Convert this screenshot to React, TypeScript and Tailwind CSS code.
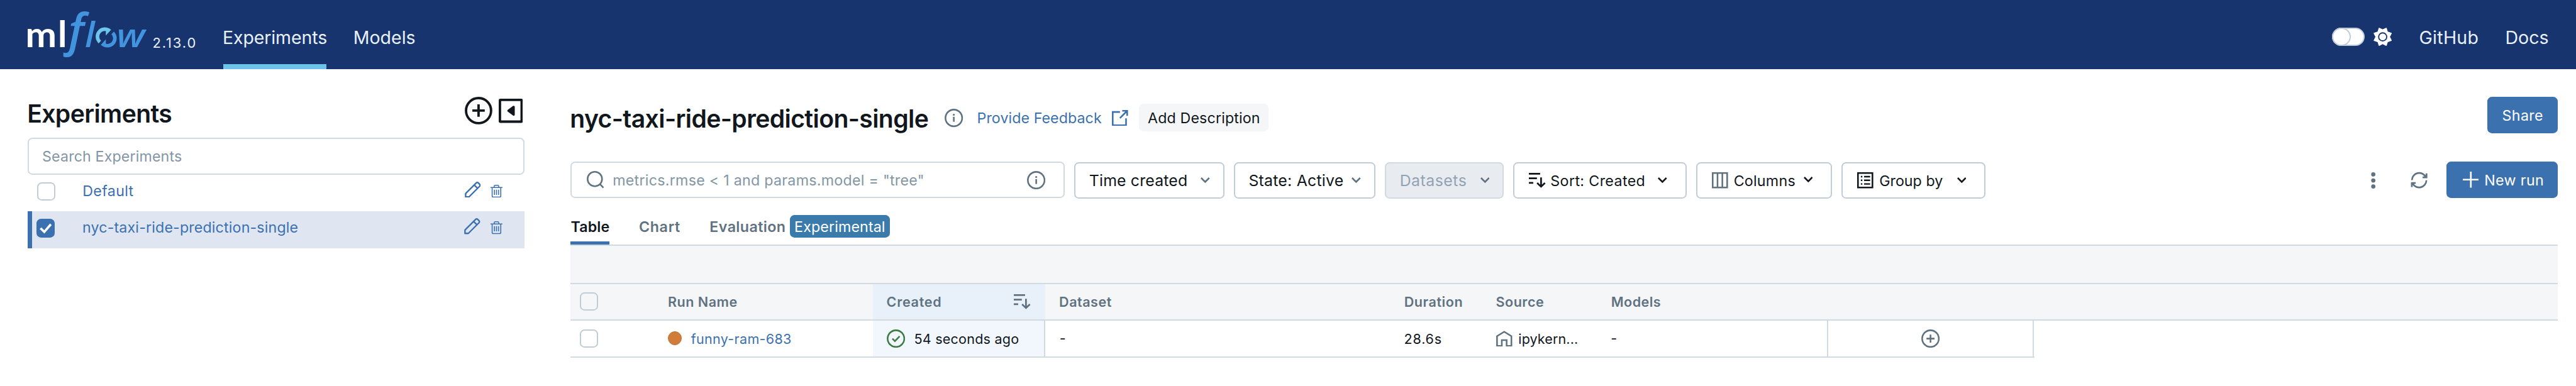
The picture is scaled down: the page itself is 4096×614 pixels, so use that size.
import type { ReactNode } from "react";

function SortIcon({ className = "" }: { className?: string }) {
  return (
    <svg className={`h-[13px] w-[14.5px] shrink-0 ${className}`} viewBox="0 0 14.5 13" fill="none" stroke="currentColor" strokeWidth="1.5">
      <path d="M0 .75h9.8M0 4.75h7M0 8.75h3.8M10.6 4v8M7.2 8.7l3.4 3.3L14 8.7" />
    </svg>
  );
}

function Chevron({ className = "" }: { className?: string }) {
  return (
    <svg className={`h-[5px] w-2 shrink-0 ${className}`} viewBox="0 0 8 5" fill="none" stroke="currentColor" strokeWidth="1.45">
      <path d="M.5.55 4 4.05 7.5.55" />
    </svg>
  );
}

function InfoIcon({ className = "" }: { className?: string }) {
  return (
    <svg className={`size-4 shrink-0 text-[#5f7281] ${className}`} viewBox="0 0 16 16" fill="none" stroke="currentColor" strokeWidth="1.4">
      <circle cx="8" cy="8" r="7.25" />
      <path d="M8 7v4.3" />
      <circle cx="8" cy="5.2" r=".85" fill="currentColor" stroke="none" />
    </svg>
  );
}

function PencilIcon({ className = "" }: { className?: string }) {
  return (
    <svg className={`size-[14px] shrink-0 ${className}`} viewBox="0 0 14 14" fill="none" stroke="currentColor" strokeWidth="1.3" strokeLinejoin="round">
      <path d="M.75 13.25v-2.9l9.3-9.3a1.2 1.2 0 0 1 1.7 0l1.2 1.2a1.2 1.2 0 0 1 0 1.7l-9.3 9.3zM8.3 2.9l2.9 2.9" />
    </svg>
  );
}

function TrashIcon({ className = "" }: { className?: string }) {
  return (
    <svg className={`h-[11.2px] w-[10.3px] shrink-0 ${className}`} viewBox="0 0 10.3 11.2" fill="none" stroke="currentColor" strokeWidth=".85">
      <path d="M0 2.35h10.3M3.2 2.3V1.2Q3.2.45 4 .45h2.3q.8 0 .8.75v1.1M1.4 2.4v7.3q0 1 1 1h5.5q1 0 1-1V2.4" />
      <path d="M3.4 4.2v4.6M5.15 4.2v4.6M6.9 4.2v4.6" />
    </svg>
  );
}

function PlusCircle({ className = "" }: { className?: string }) {
  return (
    <svg className={`size-4 shrink-0 ${className}`} viewBox="0 0 16 16" fill="none" stroke="currentColor" strokeWidth="1.4">
      <circle cx="8" cy="8" r="7.25" />
      <path d="M8 4.5v7M4.5 8h7" />
    </svg>
  );
}

function Box({ className = "" }: { className?: string }) {
  return <span className={`block size-4 shrink-0 rounded-[4px] border-[1.1px] border-[#c0cdd8] ${className}`} />;
}

function Logo() {
  return (
    <svg className="h-[42px] w-[112px] shrink-0 overflow-visible" viewBox="0 0 112 42">
      <g fill="#fff" fontFamily="Lato" fontWeight="700">
        <text transform="translate(1.9 32) scale(1.05 1)" fontSize="30.8">m</text>
        <text x="30.1" y="32" fontSize="31.8">l</text>
      </g>
      <g fill="#4294de" fontFamily="Open Sans" fontWeight="600" fontStyle="italic">
        <text x="39.3" y="31.6" fontSize="39.6">f</text>
        <text x="53.6" y="32" fontSize="31">l</text>
        <text transform="translate(81.2 32) scale(1.13 1)" fontSize="29">w</text>
      </g>
      <g fill="none" strokeWidth="3.1">
        <path d="M66.6 27.8A6.4 6.4 0 0 1 75.2 18.3" stroke="#6ec6ea" />
        <path d="M77.7 19.9A6.4 6.4 0 0 1 68.7 29.2" stroke="#4294de" />
      </g>
      <path d="M76.4 17 71.8 22.2v-4z" fill="#6ec6ea" />
      <path d="M67.2 30.6l4.6-5.2v4z" fill="#4294de" />
    </svg>
  );
}

function FilterButton({ className, children }: { className: string; children: ReactNode }) {
  return (
    <button className={`mt-[.5px] flex h-8 shrink-0 items-center rounded-[4px] border-[1.1px] whitespace-nowrap ${className}`}>
      {children}
    </button>
  );
}

function ExperimentRow({ name, spacing, selected = false }: { name: string; spacing: string; selected?: boolean }) {
  return (
    <div className={`flex h-8 items-start text-[#3c71b0] ${selected ? "border-l-4 border-[#3c71b0] bg-[#dfe6f1] pl-1" : "pl-2"}`}>
      {selected ? (
        <span className="mt-[6.5px] flex size-4 shrink-0 items-center justify-center rounded-[4px] bg-[#3c71b0]">
          <svg className="size-4" viewBox="0 0 16 16" fill="none" stroke="#fff" strokeWidth="2">
            <path d="M3.5 8.2 6.8 11.4 12.5 4.8" />
          </svg>
        </span>
      ) : (
        <Box className="mt-[6.5px]" />
      )}
      <span className={`ml-[23.8px] w-[332.2px] text-[12.7px] leading-[29.2px] ${spacing}`}>{name}</span>
      <PencilIcon className="mt-[6px]" />
      <TrashIcon className="mt-[8.7px] ml-[8.6px]" />
    </div>
  );
}

function TopBar() {
  return (
    <header className="flex h-[60px] items-start bg-[#18346f] text-[15.6px] text-[#e8f1fa]">
      <div className="mt-[9px] ml-5 w-[112px]">
        <Logo />
      </div>
      <span className="ml-[.6px] w-[61.4px] pt-[4.2px] text-[12px] leading-[66px] tracking-[1.037px]">2.13.0</span>
      <div className="flex h-[60px] w-[90px] flex-col items-center justify-between">
        <span className="leading-[66px] tracking-[-.066px]">Experiments</span>
        <span className="-mt-[10px] block h-1 w-full shrink-0 bg-[#6cc4e9]" />
      </div>
      <span className="ml-[23.2px] leading-[66px]">Models</span>
      <div className="ml-auto flex w-[212px] items-start">
        <span className="mt-6 flex h-4 w-7 rounded-full border-[1.1px] border-[#c0cdd8] bg-white">
          <span className="-m-[1.1px] block size-4 rounded-full border-[1.1px] border-[#c0cdd8] bg-white" />
        </span>
        <svg className="mt-6 ml-2 size-4 shrink-0" viewBox="0 0 16 16">
          <path
            d="M8 1.7 11.2.3 12.2 3.6 15.7 4.8 14.1 8 15.7 11.2 12.2 12.4 11.2 15.7 8 14.1 4.8 15.7 3.8 12.4.3 11.2 1.9 8 .3 4.8 3.8 3.6 4.8.3z"
            fill="#fff"
            stroke="#fff"
            strokeWidth=".5"
            strokeLinejoin="round"
          />
          <circle cx="8" cy="8" r="3.5" fill="#fff" stroke="#18346f" strokeWidth="1" />
        </svg>
        <span className="ml-[23.6px] w-[74.9px] leading-[66px] tracking-[.152px]">GitHub</span>
        <span className="leading-[66px]">Docs</span>
      </div>
    </header>
  );
}

function Sidebar() {
  return (
    <aside className="ml-6 w-[432px] shrink-0 pt-6">
      <div className="flex h-9 items-start text-[#11171c]">
        <h2 className="-ml-[.4px] w-[380.4px] text-[21.4px] leading-[29.4px] font-semibold tracking-[-.344px]">Experiments</h2>
        <svg className="mt-[.5px] size-6" viewBox="0 0 24 24" fill="none" stroke="currentColor" strokeWidth="2.1">
          <circle cx="12" cy="12" r="10.9" />
          <path d="M12 6.6v10.8M6.6 12h10.8" />
        </svg>
        <svg className="mt-[2px] ml-[5.5px] size-[21px]" viewBox="0 0 21 21" fill="none" stroke="currentColor" strokeWidth="2.1">
          <rect x="1.05" y="1.05" width="18.9" height="18.9" rx=".4" />
          <path d="M13 7.1v6.8L8.4 10.5z" fill="currentColor" strokeWidth="1.9" strokeLinejoin="round" />
        </svg>
      </div>
      <div className="flex h-8 items-center rounded-[4px] border-[1.1px] border-[#d1d9e1] pl-[11.6px] text-[12.7px] tracking-[.072px] text-[#8396a5]">
        <span className="pt-[1.2px]">Search Experiments</span>
      </div>
      <ExperimentRow name="Default" spacing="tracking-[.188px]" />
      <ExperimentRow name="nyc-taxi-ride-prediction-single" spacing="tracking-[.084px]" selected />
    </aside>
  );
}

function TitleRow() {
  return (
    <div className="flex h-8 items-start whitespace-nowrap">
      <h1 className="-ml-[.4px] w-[326px] text-[21.4px] leading-[38px] font-semibold tracking-[-.334px]">
        nyc-taxi-ride-prediction-single
      </h1>
      <InfoIcon className="mt-[10.8px]" />
      <a className="ml-[12px] w-[117.4px] text-[12.7px] leading-[38.2px] tracking-[.035px] text-[#3c71b0]">Provide Feedback</a>
      <svg className="mt-[11.5px] size-[14px] shrink-0 text-[#3c71b0]" viewBox="0 0 14 14" fill="none" stroke="currentColor" strokeWidth="1.4">
        <path d="M7 1.7H.7v11.6h11.6V7.2M9 .7h4.3V5M13.3.7 7 7" />
      </svg>
      <button className="mt-[6.5px] ml-[9.2px] h-6 w-[112.6px] rounded-[4px] bg-[#f5f6f8] pl-[7.9px] text-left text-[12.7px] leading-[25.2px] tracking-[.072px]">
        Add Description
      </button>
      <button className="ml-auto h-8 w-[61px] rounded-[4px] bg-[#3c71b0] pl-[12.8px] text-left text-[12.7px] leading-[33.2px] tracking-[.185px] text-white">
        Share
      </button>
    </div>
  );
}

function Toolbar() {
  return (
    <div className="mt-[24.5px] flex h-[32.5px] items-start text-[12.7px] whitespace-nowrap">
      <div className="flex h-8 w-[430px] shrink-0 items-center rounded-[4px] border-[1.1px] border-[#d1d9e1] pl-[12.9px] text-[#8396a5]">
        <svg className="size-[15px] shrink-0 text-[#5f7281]" viewBox="0 0 15 15" fill="none" stroke="currentColor" strokeWidth="1.4">
          <circle cx="7" cy="7" r="6.3" />
          <path d="m11.2 11.2 3.3 3.4" />
        </svg>
        <span className="ml-[7.8px] w-[360.2px] pt-[1.6px] tracking-[.145px]">metrics.rmse &lt; 1 and params.model = "tree"</span>
        <InfoIcon className="mt-[.5px]" />
      </div>
      <FilterButton className="ml-2 w-[131px] border-[#c0cdd8] pl-[12px] text-[13.6px] tracking-[.078px]">
        <span className="w-[97.1px] pt-[.7px] text-left">Time created</span>
        <Chevron className="text-[#5f7281]" />
      </FilterButton>
      <FilterButton className="ml-2 w-[123.3px] border-[#c0cdd8] pl-[11.7px] text-[13.6px] tracking-[.122px]">
        <span className="w-[89.7px] pt-[.7px] text-left">State: Active</span>
        <Chevron className="text-[#5f7281]" />
      </FilterButton>
      <FilterButton className="ml-2 w-[103.5px] border-[#d1d9e1] bg-[#e8ebf0] pl-[11.8px] text-[13.6px] tracking-[.267px] text-[#92a4b3]">
        <span className="w-[70px] pt-[.7px] text-left">Datasets</span>
        <Chevron className="text-[#5f7281]" />
      </FilterButton>
      <FilterButton className="ml-[8.2px] w-[150.6px] border-[#c0cdd8] pl-[12.6px] tracking-[.202px]">
        <SortIcon />
        <span className="ml-[4.1px] w-[93.4px] pt-[1px] text-left">Sort: Created</span>
        <Chevron />
      </FilterButton>
      <FilterButton className="ml-[8.3px] w-[118px] border-[#c0cdd8] pl-[12.6px] tracking-[.132px]">
        <svg className="size-[14px] shrink-0 text-[#5f7281]" viewBox="0 0 14 14" fill="none" stroke="currentColor" strokeWidth="1.4">
          <path d="M.7.7h12.6v12.6H.7zM4.9.7v12.6M9.1.7v12.6" />
        </svg>
        <span className="ml-[5px] w-[60.7px] pt-[1px] text-left">Columns</span>
        <Chevron className="-mt-[1.6px]" />
      </FilterButton>
      <FilterButton className="ml-[8.4px] w-[125.3px] border-[#c0cdd8] pl-[12.7px] tracking-[.022px]">
        <svg className="size-[14px] shrink-0" viewBox="0 0 14 14" fill="none" stroke="currentColor" strokeWidth="1.4">
          <path d="M.7.7h12.6v12.6H.7z" />
          <path d="M3.2 3.8h1.3M3.2 7h1.3M3.2 10.2h1.3M6 3.8h5.3M6 7h5.3M6 10.2h5.3" strokeWidth="1.3" />
        </svg>
        <span className="ml-[5.1px] w-[67.5px] pt-[1px] text-left">Group by</span>
        <Chevron />
      </FilterButton>
      <svg className="mt-[8.8px] ml-auto h-[15px] w-1 shrink-0 text-[#5f7281]" viewBox="0 0 4 15" fill="currentColor">
        <circle cx="2" cy="2.4" r="1.85" />
        <circle cx="2" cy="7.7" r="1.85" />
        <circle cx="2" cy="12.9" r="1.85" />
      </svg>
      <svg className="mt-[8.5px] ml-[30px] size-4 shrink-0 text-[#5f7281]" viewBox="0 0 16 16" fill="none" stroke="currentColor" strokeWidth="1.45">
        <path d="M1.7 7.9A6.3 6.3 0 0 1 13.7 5.3M14.4 2v3.5H11M14.3 8.1A6.3 6.3 0 0 1 2.3 10.7M1.6 14v-3.5H5" />
      </svg>
      <button className="ml-4 flex h-8 w-[96.5px] items-center rounded-[4px] bg-[#3c71b0] pl-[14px] tracking-[.2px] text-white">
        <svg className="size-[14px] shrink-0" viewBox="0 0 14 14" stroke="currentColor" strokeWidth="1.45">
          <path d="M7 0v14M0 7h14" />
        </svg>
        <span className="ml-[4.8px] pt-[1.2px]">New run</span>
      </button>
    </div>
  );
}

function Tabs() {
  return (
    <div className="flex h-[41px] items-start border-b-[1.1px] border-[#d1d9e1] text-[12.7px] leading-[49.4px] font-semibold whitespace-nowrap text-[#5f7281]">
      <div className="flex h-10 w-[34px] shrink-0 flex-col border-b-[3px] border-[#3c71b0] pl-[.3px] text-[#11171c]">
        <span className="h-[37px] tracking-[.076px]">Table</span>
      </div>
      <span className="ml-[25.6px] w-[61.5px] tracking-[.376px]">Chart</span>
      <span className="w-[69.9px] tracking-[.215px]">Evaluation</span>
      <span className="mt-[14px] h-5 w-[86.6px] rounded-[4px] bg-[#3b7bab] pl-[3.8px] leading-[21.4px] font-normal tracking-[.065px] text-white">
        Experimental
      </span>
    </div>
  );
}

function RunsTable() {
  return (
    <div className="text-[11.8px] whitespace-nowrap">
      <div className="h-[33px] border-b-[1.1px] border-[#d1d9e1] bg-[#f5f6f8]" />
      <div className="flex h-8 items-center border-b-[1.1px] border-[#d1d9e1] bg-[#f5f6f8] pl-2 font-semibold text-[#5f7281]">
        <Box />
        <span className="ml-[60.8px] w-[178.2px] pt-[.4px] tracking-[.261px]">Run Name</span>
        <span className="flex h-full w-[150px] items-center bg-[#e8f0f9] pl-[11.9px]">
          <span className="w-[110.9px] pt-[.4px] tracking-[.381px]">Created</span>
          <SortIcon />
        </span>
        <span className="w-[312px] pt-[.4px] pl-[12px] tracking-[.274px]">Dataset</span>
        <span className="w-[79.8px] pt-[.4px] tracking-[.309px]">Duration</span>
        <span className="w-[100.2px] pt-[.4px] tracking-[.263px]">Source</span>
        <span className="pt-[.4px] tracking-[.24px]">Models</span>
      </div>
      <div className="flex h-8 w-[1273px] items-center border-b-[1.1px] border-[#d1d9e1] pl-2">
        <Box />
        <span className="ml-[61px] block size-3 rounded-full border-[.6px] border-[#bf6f2f] bg-[#cf7d38]" />
        <span className="ml-[7.9px] w-[158.1px] pt-[.4px] tracking-[.162px] text-[#3c71b0]">funny-ram-683</span>
        <span className="flex h-full w-[150px] items-center border-r-[1.1px] border-[#d1d9e1] bg-[#f2f7fe] pl-3">
          <svg className="size-4 shrink-0 text-[#3a7c42]" viewBox="0 0 16 16" fill="none" stroke="currentColor" strokeWidth="1.4">
            <circle cx="8" cy="8" r="7.25" />
            <path d="m4.9 8 2.2 2.2 4.1-4.3" />
          </svg>
          <span className="ml-[7.9px] pt-[.4px] tracking-[.112px]">54 seconds ago</span>
        </span>
        <span className="w-[312px] pl-[12.4px]">-</span>
        <span className="w-[80.2px] pt-[.4px] tracking-[.413px]">28.6s</span>
        <svg className="size-[14px] shrink-0 text-[#5f7281]" viewBox="0 0 14 14" fill="none" stroke="currentColor" strokeWidth="1.4">
          <path d="M.75 13.3V4.8L7 .9l6.25 3.9v8.5H9.1V8.2H4.9v5.1z" />
        </svg>
        <span className="ml-[5.2px] w-[80.4px] pt-[.4px] tracking-[.052px]">ipykern...</span>
        <span className="w-[187.8px]">-</span>
        <span className="flex h-full w-[180px] items-center justify-center border-x-[1.1px] border-[#d1d9e1] text-[#5f7281]">
          <PlusCircle />
        </span>
      </div>
    </div>
  );
}

export default function App() {
  return (
    <div className="w-[2240px] overflow-hidden bg-white font-['Inter',sans-serif] text-[#11171c] [zoom:1.828571]">
      <TopBar />
      <div className="flex">
        <Sidebar />
        <main className="ml-10 w-[1728px] shrink-0 pt-6">
          <TitleRow />
          <Toolbar />
          <Tabs />
          <RunsTable />
        </main>
      </div>
    </div>
  );
}
